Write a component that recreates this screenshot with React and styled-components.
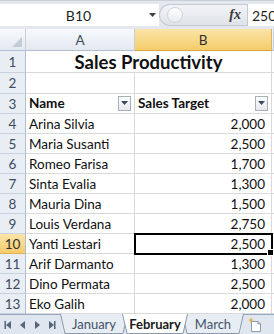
import React from 'react';
import styled, { createGlobalStyle } from 'styled-components';

const GlobalStyle = createGlobalStyle`
  html, body {
    margin: 0;
    padding: 0;
    background: #ffffff;
    overflow: hidden;
  }
  body {
    font-family: Lato, "Open Sans", sans-serif;
  }
`;

const rows = [
  { n: 4, name: 'Arina Silvia', target: '2,000' },
  { n: 5, name: 'Maria Susanti', target: '2,500' },
  { n: 6, name: 'Romeo Farisa', target: '1,700' },
  { n: 7, name: 'Sinta Evalia', target: '1,300' },
  { n: 8, name: 'Mauria Dina', target: '1,500' },
  { n: 9, name: 'Louis Verdana', target: '2,750' },
  { n: 10, name: 'Yanti Lestari', target: '2,500', selected: true },
  { n: 11, name: 'Arif Darmanto', target: '1,300' },
  { n: 12, name: 'Dino Permata', target: '2,500' },
  { n: 13, name: 'Eko Galih', target: '2,000' },
];

const tabs = [
  { label: 'January', width: 68 },
  { label: 'February', width: 66, active: true },
  { label: 'March', width: 62 },
];

const Window = styled.div`
  width: 274px;
  height: 334px;
  display: flex;
  flex-direction: column;
  background: #ffffff;
  overflow: hidden;
`;

const FormulaBar = styled.div`
  height: 29px;
  display: flex;
  align-items: stretch;
  padding: 3px 0 3px 0;
  box-sizing: border-box;
  background: #e4e8ee;
  border-top: 1px solid #c9d0da;
`;

const NameBox = styled.div`
  width: 145px;
  background: #ffffff;
  display: flex;
  align-items: center;
  justify-content: center;
  font-size: 14px;
  color: #1e1e1e;
  padding-left: 12px;
  box-sizing: border-box;
`;

const DropZone = styled.div`
  width: 14px;
  background: #ffffff;
  display: flex;
  align-items: center;
  justify-content: center;
`;

const FxPill = styled.div`
  width: 88px;
  background: linear-gradient(#f2f4f7, #dfe3e9);
  border-radius: 12px 0 0 12px;
  border: 1px solid #c3cad4;
  border-right: none;
  box-sizing: border-box;
  display: flex;
  align-items: center;
  justify-content: space-between;
  padding: 0 6px 0 7px;
`;

const PillKnob = styled.div`
  width: 14px;
  height: 14px;
  border-radius: 50%;
  border: 1px solid #cfd5dd;
  background: linear-gradient(#ffffff, #e9ecf1);
`;

const Fx = styled.span`
  font-family: "Liberation Serif", serif;
  font-style: italic;
  font-weight: bold;
  font-size: 14px;
  color: #3a3a3a;
`;

const FormulaInput = styled.div`
  flex: 1;
  background: #ffffff;
  border-left: 1px solid #c3cad4;
  display: flex;
  align-items: center;
  padding-left: 4px;
  font-size: 14px;
  color: #1e1e1e;
  white-space: nowrap;
  overflow: hidden;
`;

const Sheet = styled.div`
  display: flex;
  flex-direction: column;
  flex: 1;
`;

const Row = styled.div`
  display: flex;
  height: ${(p) => p.h}px;
  flex-shrink: 0;
`;

const ColHead = styled.div`
  width: ${(p) => p.w}px;
  flex-shrink: 0;
  box-sizing: border-box;
  display: flex;
  align-items: center;
  justify-content: center;
  font-size: 13.5px;
  color: ${(p) => (p.active ? '#2f2f2f' : '#3d4b5e')};
  background: ${(p) =>
    p.active
      ? 'linear-gradient(#fae4a8, #f5cc6b)'
      : 'linear-gradient(#f7f9fc, #e4e9f0)'};
  border-right: 1px solid ${(p) => (p.active ? '#e0b254' : '#c5cfdb')};
  border-bottom: 1px solid ${(p) => (p.active ? '#d9a63a' : '#b2bfd0')};
`;

const Corner = styled(ColHead)`
  align-items: flex-end;
  justify-content: flex-end;
  padding: 0 3px 3px 0;
`;

const RowHead = styled.div`
  width: 26px;
  flex-shrink: 0;
  box-sizing: border-box;
  display: flex;
  align-items: center;
  justify-content: center;
  font-size: 13.5px;
  color: ${(p) => (p.active ? '#2f2f2f' : '#3d4b5e')};
  background: ${(p) =>
    p.active ? 'linear-gradient(#fae4a8, #f5cc6b)' : '#e9eef5'};
  border-right: 1px solid #b2bfd0;
  border-bottom: 1px solid ${(p) => (p.active ? '#e0b254' : '#c8d2de')};
`;

const Cell = styled.div`
  width: ${(p) => p.w}px;
  flex-shrink: 0;
  box-sizing: border-box;
  display: flex;
  align-items: flex-end;
  justify-content: ${(p) =>
    p.align === 'right' ? 'flex-end' : p.align === 'center' ? 'center' : 'flex-start'};
  padding: 0 ${(p) => (p.align === 'right' ? 6 : 3)}px 1px 3px;
  font-size: 13.5px;
  font-weight: ${(p) => (p.bold ? 700 : 400)};
  color: #101010;
  border-right: 1px solid #d9d9d9;
  border-bottom: 1px solid #d9d9d9;
  white-space: nowrap;
  position: relative;
  outline: ${(p) => (p.selected ? '2px solid #000' : 'none')};
  outline-offset: -1px;
  z-index: ${(p) => (p.selected ? 2 : 0)};
`;

const Title = styled(Cell)`
  font-size: 18.5px;
  font-weight: 700;
  align-items: center;
  padding: 0;
`;

const HeaderLabel = styled.span`
  flex: 1;
  align-self: center;
`;

const FilterButton = styled.div`
  width: 13px;
  height: 15px;
  box-sizing: border-box;
  border: 1px solid #a7afba;
  background: linear-gradient(#ffffff, #e5e8ed);
  display: flex;
  align-items: center;
  justify-content: center;
  align-self: center;
  flex-shrink: 0;
`;

const FillHandle = styled.div`
  position: absolute;
  right: -3px;
  bottom: -3px;
  width: 5px;
  height: 5px;
  background: #000;
  border: 1px solid #fff;
`;

const TabBar = styled.div`
  height: 20px;
  margin-top: auto;
  display: flex;
  align-items: stretch;
  background: #dfe6ef;
  border-top: 1px solid #9aa8ba;
  box-sizing: border-box;
`;

const NavButtons = styled.div`
  width: 60px;
  display: flex;
  align-items: center;
  justify-content: space-around;
  padding: 0 2px;
  box-sizing: border-box;
`;

const Tabs = styled.div`
  display: flex;
  align-items: stretch;
`;

const Tab = styled.div`
  width: ${(p) => p.w}px;
  margin-right: -6px;
  position: relative;
  display: flex;
  align-items: center;
  justify-content: center;
  font-size: 13px;
  font-weight: ${(p) => (p.active ? 700 : 400)};
  color: ${(p) => (p.active ? '#1a1a1a' : '#42526a')};
  z-index: ${(p) => (p.active ? 2 : 1)};
  margin-top: -1px;

  svg {
    position: absolute;
    inset: 0;
  }
  span {
    position: relative;
    margin-bottom: 1px;
  }
`;

const NewSheet = styled.div`
  margin-left: 10px;
  display: flex;
  align-items: center;
`;

function TriangleDown({ color = '#3b4a5e', size = 7 }) {
  return (
    <svg width={size} height={size / 2 + 1} viewBox="0 0 8 5">
      <path d="M0 0 H8 L4 4.5 Z" fill={color} />
    </svg>
  );
}

function NavIcon({ dir, bar }) {
  const tri = dir === 'left' ? 'M7 1 V9 L2 5 Z' : 'M3 1 V9 L8 5 Z';
  return (
    <svg width="10" height="10" viewBox="0 0 10 10">
      <path d={tri} fill="#566479" />
      {bar && <rect x={dir === 'left' ? 0.5 : 8} y="1" width="1.5" height="8" fill="#566479" />}
    </svg>
  );
}

function TabShape({ w, active }) {
  return (
    <svg width={w} height="21" viewBox={`0 0 ${w} 21`}>
      <path
        d={`M0.5 0 L5 19.5 L${w - 5} 19.5 L${w - 0.5} 0`}
        fill={active ? '#ffffff' : '#e8edf4'}
        stroke="#8b99ad"
        strokeWidth="1"
      />
    </svg>
  );
}

function App() {
  return (
    <Window>
      <GlobalStyle />
      <FormulaBar>
        <NameBox>B10</NameBox>
        <DropZone>
          <TriangleDown color="#404040" size={7} />
        </DropZone>
        <FxPill>
          <PillKnob />
          <Fx>fx</Fx>
        </FxPill>
        <FormulaInput>2500</FormulaInput>
      </FormulaBar>
      <Sheet>
        <Row h={22}>
          <Corner w={26}>
            <svg width="10" height="10" viewBox="0 0 10 10">
              <path d="M10 0 V10 H0 Z" fill="#c4ccd6" />
            </svg>
          </Corner>
          <ColHead w={109}>A</ColHead>
          <ColHead w={137} active>B</ColHead>
          <ColHead w={2} />
        </Row>
        <Row h={22}>
          <RowHead>1</RowHead>
          <Title w={246} align="center">Sales Productivity</Title>
          <Cell w={2} />
        </Row>
        <Row h={21}>
          <RowHead>2</RowHead>
          <Cell w={109} />
          <Cell w={137} />
          <Cell w={2} />
        </Row>
        <Row h={20}>
          <RowHead>3</RowHead>
          <Cell w={109} bold>
            <HeaderLabel>Name</HeaderLabel>
            <FilterButton>
              <TriangleDown />
            </FilterButton>
          </Cell>
          <Cell w={137} bold>
            <HeaderLabel>Sales Target</HeaderLabel>
            <FilterButton>
              <TriangleDown />
            </FilterButton>
          </Cell>
          <Cell w={2} />
        </Row>
        {rows.map((r) => (
          <Row h={20} key={r.n}>
            <RowHead active={r.selected}>{r.n}</RowHead>
            <Cell w={109}>{r.name}</Cell>
            <Cell w={137} align="right" selected={r.selected}>
              {r.target}
              {r.selected && <FillHandle />}
            </Cell>
            <Cell w={2} />
          </Row>
        ))}
        <TabBar>
          <NavButtons>
            <NavIcon dir="left" bar />
            <NavIcon dir="left" />
            <NavIcon dir="right" />
            <NavIcon dir="right" bar />
          </NavButtons>
          <Tabs>
            {tabs.map((t) => (
              <Tab key={t.label} w={t.width} active={t.active}>
                <TabShape w={t.width} active={t.active} />
                <span>{t.label}</span>
              </Tab>
            ))}
          </Tabs>
          <NewSheet>
            <svg width="14" height="15" viewBox="0 0 14 15">
              <path d="M3.5 4.5 H10 L12.5 7 V14.5 H3.5 Z" fill="#ffffff" stroke="#8b99ad" />
              <path d="M10 4.5 V7 H12.5" fill="none" stroke="#8b99ad" />
              <path d="M3 0.5 L4 2.5 L6 3 L4 3.8 L3 6.5 L2 3.8 L0 3 L2 2.5 Z" fill="#e7b13a" />
            </svg>
          </NewSheet>
        </TabBar>
      </Sheet>
    </Window>
  );
}

export default App;
